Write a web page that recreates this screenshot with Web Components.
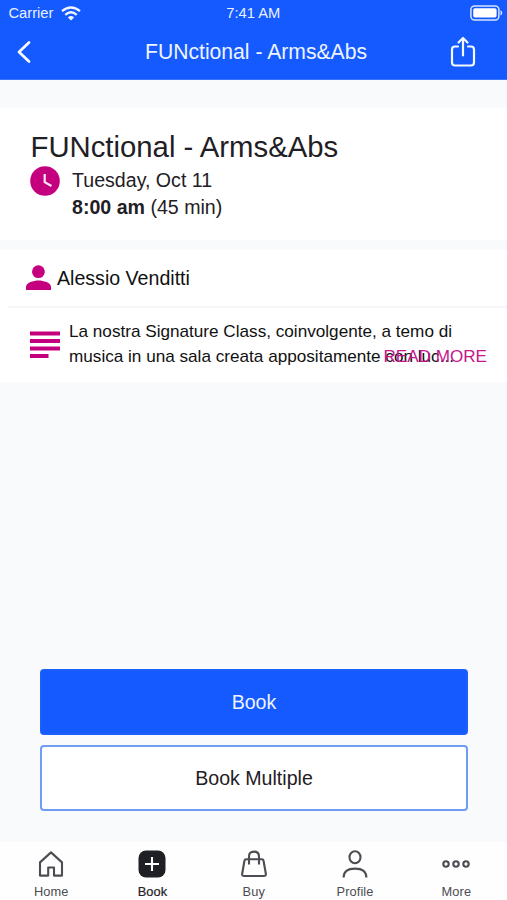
<!DOCTYPE html>
<html lang="it">
<head>
<meta charset="utf-8">
<title>FUNctional - Arms&amp;Abs</title>
<style>
body{margin:0;background:#f8fafc;font-family:"Liberation Sans",Arial,sans-serif;color:#1f2025}
</style>
</head>
<body>
<class-screen></class-screen>
<script>
function define(name, html){
  const t=document.createElement('template');
  t.innerHTML=html;
  customElements.define(name, class extends HTMLElement{
    constructor(){super();this.attachShadow({mode:'open'}).append(t.content.cloneNode(true));}
  });
}

define('status-bar', `
<style>
:host{display:grid;grid-template-columns:1fr auto 1fr;align-items:center;height:24px;padding:0 4px 0 8.5px;color:#e9f1ff;font-size:14.7px;line-height:24px;box-sizing:border-box}
.l{display:flex;align-items:center;gap:8px;padding-top:1px}
.t{font-size:14.7px;margin-right:5px}
.r{display:flex;justify-content:flex-end;padding-top:1px}
svg{display:block}
</style>
<div class="l"><span>Carrier</span>
<svg width="20" height="15" viewBox="0 0 20 15" fill="none" stroke="#f2f7ff" stroke-width="2.3"><path d="M1 5.2Q10-2.2 19 5.2"/><path d="M4.3 8.8Q10 3.8 15.7 8.8"/><path d="M6.9 11.4Q10 8.6 13.1 11.4L10 14.5Z" fill="#f2f7ff" stroke="none"/></svg></div>
<span class="t">7:41 AM</span>
<div class="r"><svg width="33" height="16" viewBox="0 0 33 16"><rect x=".9" y=".9" width="28" height="14" rx="3.6" fill="none" stroke="#d5e3ff" stroke-width="1.5"/><rect x="3.2" y="3.2" width="23.4" height="9.4" rx="1.8" fill="#fff"/><path d="M30.5 5.2Q32.3 6 32.3 7.9T30.5 10.6Z" fill="#d5e3ff"/></svg></div>`);

define('nav-bar', `
<style>
:host{display:grid;grid-template-columns:56px 1fr 56px;align-items:center;height:56px;color:#eef4ff;font-size:21.15px;box-sizing:border-box;border-bottom:1px solid #3a76fd}
.t{text-align:center;white-space:nowrap;padding-left:5px}
svg{display:block}
.back{margin-left:16px}
.share{margin-left:-1px}
</style>
<svg class="back" width="16" height="24" viewBox="0 0 16 24" fill="none" stroke="#f4f8ff" stroke-width="2.8" stroke-linecap="round" stroke-linejoin="round"><path d="M13 2.5L3 12L13 21.5"/></svg>
<span class="t"><slot></slot></span>
<svg class="share" width="26" height="32" viewBox="0 0 26 32" fill="none" stroke="#f4f8ff" stroke-width="2.2" stroke-linecap="round" stroke-linejoin="round"><path d="M8 10.5H5Q2 10.5 2 13.5V26.5Q2 29.5 5 29.5H21Q24 29.5 24 26.5V13.5Q24 10.5 21 10.5H18"/><path d="M13 19.5V2.5M8.5 6.5L13 2L17.5 6.5"/></svg>`);

define('session-header', `
<style>
:host{display:block;height:132px;margin-top:28px;padding:21px 30px 0;background:#fff;box-sizing:border-box}
h1{margin:0 0 1px .5px;font-weight:400;font-size:29.3px;line-height:36px;white-space:nowrap}
.row{display:flex;gap:12px}
svg{flex:none}
.txt{font-size:19.6px;line-height:27px;white-space:nowrap;padding-top:1px}
</style>
<h1><slot name="title"></slot></h1>
<div class="row">
<svg width="30" height="30" viewBox="0 0 30 30"><circle cx="15" cy="15" r="14.8" fill="#c5007f"/><path d="M14.7 8V16.2L21.5 20" fill="none" stroke="#fce8f5" stroke-width="2.2"/></svg>
<div class="txt"><div><slot name="date"></slot></div><div><slot name="time"></slot></div></div>
</div>`);

define('instructor-row', `
<style>
:host{display:flex;align-items:center;gap:6px;height:56px;margin-top:10px;padding-left:26px;background:#fff;color:#111;font-size:19.6px;box-sizing:border-box}
svg{display:block}
</style>
<svg width="25" height="26" viewBox="0 0 25 26" fill="#c5007f"><circle cx="12.4" cy="6.7" r="6.4"/><path d="M0 25.1V22C0 17.7 7.5 15.6 12.5 15.6S25 17.7 25 22V25.1Z"/></svg>
<span><slot></slot></span>`);

define('description-row', `
<style>
:host{display:block;background:#fff;padding-left:8px}
.in{display:flex;position:relative;border-top:2px solid #f5f6f8;height:76px;box-sizing:border-box;padding:11px 0 0 22px;gap:9px;color:#111}
svg{margin-top:12px;flex:none}
.txt{font-size:17.15px;line-height:24.5px;white-space:nowrap}
.more{position:absolute;right:20px;top:36px;color:#c5168b;font-size:17.1px;line-height:25px;white-space:nowrap}
</style>
<div class="in">
<svg width="30" height="28" viewBox="0 0 30 28" fill="#c5007f"><path d="M0 .5H30V4.500H0ZM0 8H30V12H0ZM0 15.500H30V19.500H0ZM0 23H18.500V27H0Z"/></svg>
<div class="txt"><slot></slot></div>
<span class="more">READ MORE</span>
</div>`);

define('action-button', `
<style>
:host{display:flex;align-items:center;justify-content:center;height:66px;box-sizing:border-box;border:2px solid #6f9cf4;border-radius:4px;background:#fff;color:#1f2025;font-size:19.6px}
:host([primary]){background:#145aff;border-color:#1c5ffa;color:#eef4ff}
</style><span><slot></slot></span>`);

define('tab-item', `
<style>
:host{display:flex;flex-direction:column;align-items:center;flex:1;color:#4b4d52;font-size:12.8px;letter-spacing:.1px}
:host([active]){color:#1f2025;-webkit-text-stroke:.2px #1f2025}
.i{display:flex;align-items:center;justify-content:center;height:30px}
.t{line-height:16px;margin-top:5px}
</style><div class="i"><slot name="icon"></slot></div><span class="t"><slot></slot></span>`);

define('tab-bar', `
<style>
:host{display:flex;height:58px;padding:7px 0 0 .5px;box-sizing:border-box;background:#fefefe}
svg{display:block;fill:none;stroke:#4b4d52;stroke-width:2.1;stroke-linejoin:round}
</style>
<tab-item><svg slot="icon" width="26" height="28" viewBox="0 0 26 28"><path d="M2 12.4L13 2.4L24 12.4V25.6H16V17.5H10.2V25.6H2Z"/></svg>Home</tab-item>
<tab-item active><svg slot="icon" width="28" height="28" viewBox="0 0 28 28"><rect x=".5" y=".5" width="27" height="27" rx="7.5" fill="#1f2025" stroke="none"/><path d="M14 7V21M7 14H21" stroke="#fff"/></svg>Book</tab-item>
<tab-item><svg slot="icon" width="28" height="28" viewBox="0 0 28 28"><path d="M6.200 9.200H21.800Q23.300 9.200 23.500 10.500L25.800 23.500Q26.200 26 23.800 26H4.200Q1.800 26 2.200 23.500L4.500 10.500Q4.700 9.200 6.200 9.200Z"/><path d="M9 14.500V6.500Q9 1.600 14 1.600T19 6.500V14.500"/></svg>Buy</tab-item>
<tab-item><svg slot="icon" width="28" height="28" viewBox="0 0 28 28"><ellipse cx="14" cy="7.300" rx="5.500" ry="6"/><path d="M2.600 27.500Q2.600 18.600 14 18.600T25.400 27.500"/></svg>Profile</tab-item>
<tab-item><svg slot="icon" width="28" height="28" viewBox="0 0 28 28"><circle cx="4" cy="14" r="2.700"/><circle cx="14" cy="14" r="2.700"/><circle cx="24" cy="14" r="2.700"/></svg>More</tab-item>`);

define('class-screen', `
<style>
:host{display:flex;flex-direction:column;height:900px;overflow:hidden}
header{background:#145aff}
.actions{display:grid;gap:10px;margin:auto 39px 31px 40px}
</style>
<header><status-bar></status-bar><nav-bar>FUNctional - Arms&amp;Abs</nav-bar></header>
<session-header><span slot="title">FUNctional - Arms&amp;Abs</span><span slot="date">Tuesday, Oct 11</span><span slot="time"><b>8:00 am</b> (45 min)</span></session-header>
<instructor-row>Alessio Venditti</instructor-row>
<description-row>La nostra Signature Class, coinvolgente, a temo di<br>musica in una sala creata appositamente con luc...</description-row>
<div class="actions"><action-button primary>Book</action-button><action-button>Book Multiple</action-button></div>
<tab-bar></tab-bar>`);
</script>
</body>
</html>
